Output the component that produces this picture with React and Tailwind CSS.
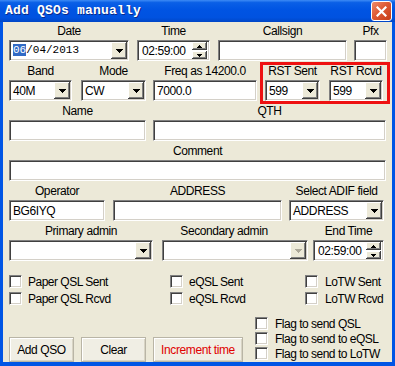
import React from "react";

const sunken =
  "bg-white border border-t-[#808080] border-l-[#808080] border-b-white border-r-white shadow-[inset_1px_1px_0_#404040,inset_-1px_-1px_0_#d4d0c8]";
const raised =
  "bg-[#ece9d8] shadow-[inset_-1px_-1px_0_#404040,inset_1px_1px_0_#ffffff,inset_-2px_-2px_0_#808080]";

function Tri({ disabled, up, small }) {
  const fill = disabled ? "#aca899" : "#000";
  if (small) {
    return (
      <svg width="5" height="3" viewBox="0 0 5 3" shapeRendering="crispEdges">
        {up ? (
          <path d="M2 0h1v1h1v1h1v1h-5v-1h1v-1h1z" fill={fill} />
        ) : (
          <path d="M0 0h5v1h-1v1h-1v1h-1v-1h-1v-1h-1z" fill={fill} />
        )}
      </svg>
    );
  }
  return (
    <svg width="7" height="4" viewBox="0 0 7 4" shapeRendering="crispEdges">
      <path d="M0 0h7v1h-1v1h-1v1h-1v1h-1v-1h-1v-1h-1v-1h-1z" fill={fill} />
    </svg>
  );
}

function Combo({ className = "", value, disabled, children }) {
  return (
    <div className={`flex h-[21px] p-[1px] ${sunken} ${className}`}>
      <div className="flex-1 flex items-center pl-[2px] overflow-hidden whitespace-nowrap">
        {children ?? value}
      </div>
      <div className={`w-[16px] h-[17px] flex items-center justify-center ${raised}`}>
        <Tri disabled={disabled} />
      </div>
    </div>
  );
}

function Input({ className = "", value }) {
  return (
    <div className={`h-[21px] flex items-center pl-[3px] ${sunken} ${className}`}>
      {value}
    </div>
  );
}

function Spinner({ className = "", value }) {
  return (
    <div className={`h-[21px] flex items-center p-[1px] ${sunken} ${className}`}>
      <div className="flex-1 pl-[3px] whitespace-nowrap">{value}</div>
      <div className="flex flex-col w-[15px] h-[17px] mr-[1px] gap-[1px]">
        <div className={`flex-1 flex items-center justify-center ${raised}`}>
          <Tri small up />
        </div>
        <div className={`flex-1 flex items-center justify-center ${raised}`}>
          <Tri small />
        </div>
      </div>
    </div>
  );
}

function Col({ className = "", label, labelH = "h-[19px]", labelClass = "", children }) {
  return (
    <div className={`flex flex-col ${className}`}>
      <div className={`${labelH} flex items-center justify-center whitespace-nowrap ${labelClass}`}>
        {label}
      </div>
      {children}
    </div>
  );
}

function Check({ label, className = "", gap = "ml-[7px]" }) {
  return (
    <div className={`flex items-center h-[13px] ${className}`}>
      <div className={`w-[13px] h-[13px] shrink-0 ${sunken}`} />
      <span className={`${gap} whitespace-nowrap tracking-[-0.5px]`}>{label}</span>
    </div>
  );
}

function Button({ className = "", children }) {
  return (
    <div
      className={`h-[25px] flex items-center justify-center bg-[#f0eee4] border border-[#b9b5a6] shadow-[inset_1px_1px_0_#ffffff,inset_-1px_-1px_0_#d8d4c4] ${className}`}
    >
      {children}
    </div>
  );
}

export default function App() {
  return (
    <div className="w-[395px] h-[366px] flex flex-col bg-[#0055e5] font-['Liberation_Sans',Arial,sans-serif] text-[12px] tracking-[-0.4px] text-black overflow-hidden">
      {/* Title bar */}
      <div className="h-[22px] flex items-center justify-between pl-[5px] pr-[3px] bg-[linear-gradient(to_bottom,#3d8bf5_0%,#0a5fe6_12%,#0054e3_45%,#0052e0_80%,#0046c6_100%)]">
        <span className="font-['Liberation_Mono',monospace] font-bold text-[13px] text-white tracking-[0.2px] [text-shadow:1px_1px_0_#0b2a8a]">
          Add QSOs manually
        </span>
        <div className="w-[21px] h-[20px] rounded-[3px] border border-white bg-[linear-gradient(135deg,#ee8c6c_0%,#de5a35_45%,#c63d18_100%)] flex items-center justify-center">
          <svg width="11" height="11" viewBox="0 0 11 11">
            <path d="M1.5 1.5L9.5 9.5M9.5 1.5L1.5 9.5" stroke="#fff" strokeWidth="2.2" strokeLinecap="square" />
          </svg>
        </div>
      </div>

      {/* Body */}
      <div className="flex-1 mx-[3px] mb-[4px] bg-[#ece9d8] relative pl-[6px]">
        {/* Row 1 */}
        <div className="flex">
          <Col className="w-[120px]" label="Date" labelH="h-[18px]">
            <Combo>
              <span className="font-['Liberation_Mono',monospace] text-[11px] tracking-normal">
                <span className="bg-[#316ac5] text-white">06</span>/04/2013
              </span>
            </Combo>
          </Col>
          <Col className="w-[73px] ml-[8px]" label="Time" labelH="h-[18px]">
            <Spinner value="02:59:00" />
          </Col>
          <Col className="w-[129px] ml-[8px]" label="Callsign" labelH="h-[18px]">
            <Input />
          </Col>
          <Col className="w-[33px] ml-[7px]" label="Pfx" labelH="h-[18px]">
            <Input />
          </Col>
        </div>

        {/* Row 2 */}
        <div className="flex">
          <Col className="w-[63px]" label="Band">
            <Combo value="40M" />
          </Col>
          <Col className="w-[65px] ml-[9px]" label="Mode">
            <Combo value="CW" />
          </Col>
          <Col className="w-[104px] ml-[7px]" label="Freq as 14200.0">
            <Input value="7000.0" />
          </Col>
          <Col className="w-[55px] ml-[8px]" label="RST Sent">
            <Combo value="599" />
          </Col>
          <Col className="w-[54px] ml-[9px]" label="RST Rcvd">
            <Combo value="599" />
          </Col>
        </div>

        {/* Row 3 */}
        <div className="flex">
          <Col className="w-[137px]" label="Name">
            <Input />
          </Col>
          <Col className="w-[233px] ml-[7px]" label="QTH">
            <Input />
          </Col>
        </div>

        {/* Row 4 */}
        <div className="flex">
          <Col className="w-[377px]" label="Comment">
            <Input />
          </Col>
        </div>

        {/* Row 5 */}
        <div className="flex">
          <Col className="w-[96px]" label="Operator">
            <Input value="BG6IYQ" />
          </Col>
          <Col className="w-[169px] ml-[8px]" label="ADDRESS">
            <Input />
          </Col>
          <Col className="w-[95px] ml-[7px]" label="Select ADIF field">
            <Combo value="ADDRESS" />
          </Col>
        </div>

        {/* Row 6 */}
        <div className="flex">
          <Col className="w-[144px]" label="Primary admin">
            <Combo />
          </Col>
          <Col className="w-[146px] ml-[9px]" label="Secondary admin" labelClass="pr-[22px]">
            <Combo disabled />
          </Col>
          <Col className="w-[71px] ml-[5px]" label="End Time">
            <Spinner value="02:59:00" />
          </Col>
        </div>

        {/* Checkbox rows */}
        <div className="flex mt-[14px]">
          <Check className="w-[161px]" label="Paper QSL Sent" gap="ml-[6px]" />
          <Check className="w-[135px]" label="eQSL Sent" gap="ml-[6px]" />
          <Check label="LoTW Sent" gap="ml-[7px]" />
        </div>
        <div className="flex mt-[4px]">
          <Check className="w-[161px]" label="Paper QSL Rcvd" gap="ml-[6px]" />
          <Check className="w-[135px]" label="eQSL Rcvd" gap="ml-[6px]" />
          <Check label="LoTW Rcvd" gap="ml-[7px]" />
        </div>

        {/* Bottom */}
        <div className="flex mt-[12px]">
          <div className="flex mt-[20px]">
            <Button className="w-[65px]">Add QSO</Button>
            <Button className="w-[65px] ml-[7px]">Clear</Button>
            <Button className="w-[90px] ml-[7px] text-[#e00000]">Increment time</Button>
          </div>
          <div className="flex flex-col gap-[2px] ml-[12px]">
            <Check label="Flag to send QSL" gap="ml-[7px]" />
            <Check label="Flag to send to eQSL" gap="ml-[7px]" />
            <Check label="Flag to send to LoTW" gap="ml-[7px]" />
          </div>
        </div>

        {/* Red annotation box */}
        <div className="absolute left-[257px] top-[40px] w-[130px] h-[42px] border-[3px] border-[#ee1111] pointer-events-none" />
      </div>
    </div>
  );
}
